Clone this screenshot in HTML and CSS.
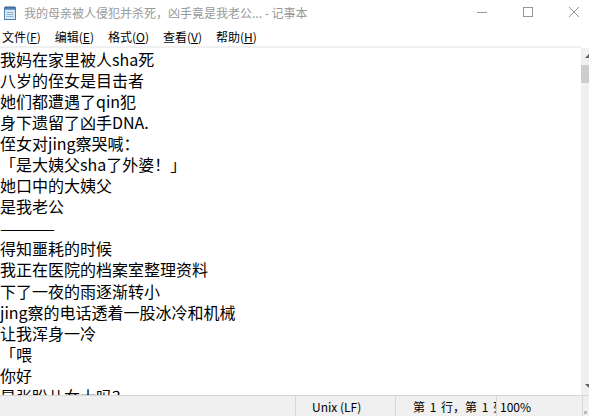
FILE: index.html
```html
<!DOCTYPE html>
<html lang="zh">
<head>
<meta charset="utf-8">
<title>记事本</title>
<link rel="stylesheet" href="styles.css">
</head>
<body>
<div class="window">
  <div class="titlebar">
    <svg class="app-icon" width="14" height="15" viewBox="0 0 14 15">
      <rect x="1.5" y="2.5" width="11" height="12" fill="#dbe9f6" stroke="#4a7fb8"/>
      <rect x="2" y="3" width="10" height="2" fill="#6f9fd3"/>
      <path d="M3 1v3M5 1v3M7 1v3M9 1v3M11 1v3" stroke="#3d5f86" stroke-width="1"/>
      <path d="M3.5 7.5h7M3.5 9.5h7M3.5 11.5h7" stroke="#8fb2d8" stroke-width="1"/>
    </svg>
    <span class="title">我的母亲被人侵犯并杀死，凶手竟是我老公... - 记事本</span>
    <div class="controls">
      <div class="ctl"><svg width="10" height="10" viewBox="0 0 10 10"><path d="M0 5.5h10" stroke="#999" stroke-width="1"/></svg></div>
      <div class="ctl"><svg width="10" height="10" viewBox="0 0 10 10"><rect x="0.5" y="0.5" width="9" height="9" fill="none" stroke="#999" stroke-width="1"/></svg></div>
      <div class="ctl"><svg width="10" height="10" viewBox="0 0 10 10"><path d="M0 0L10 10M10 0L0 10" stroke="#999" stroke-width="1"/></svg></div>
    </div>
  </div>
  <div class="menubar">
    <span class="menu">文件(<u>F</u>)</span>
    <span class="menu">编辑(<u>E</u>)</span>
    <span class="menu">格式(<u>O</u>)</span>
    <span class="menu">查看(<u>V</u>)</span>
    <span class="menu">帮助(<u>H</u>)</span>
  </div>
  <div class="divider"></div>
  <div class="main">
    <div class="editor">
      <div class="line">我妈在家里被人sha死</div>
      <div class="line">八岁的侄女是目击者</div>
      <div class="line">她们都遭遇了qin犯</div>
      <div class="line">身下遗留了凶手DNA.</div>
      <div class="line">侄女对jing察哭喊：</div>
      <div class="line">「是大姨父sha了外婆！」</div>
      <div class="line">她口中的大姨父</div>
      <div class="line">是我老公</div>
      <div class="line dash">————</div>
      <div class="line">得知噩耗的时候</div>
      <div class="line">我正在医院的档案室整理资料</div>
      <div class="line">下了一夜的雨逐渐转小</div>
      <div class="line">jing察的电话透着一股冰冷和机械</div>
      <div class="line">让我浑身一冷</div>
      <div class="line">「喂</div>
      <div class="line">你好</div>
      <div class="line">是张盼儿女士吗？</div>
    </div>
    <div class="scrollbar">
      <div class="arrow up"></div>
      <div class="thumb"></div>
      <div class="track"></div>
      <div class="arrow down"></div>
    </div>
  </div>
  <div class="statusbar">
    <div class="cell empty"></div>
    <div class="cell eol">Unix (LF)</div>
    <div class="cell pos">第 1 行，第 1 列</div>
    <div class="cell zoom">100%</div>
    <div class="grip"></div>
  </div>
</div>
</body>
</html>
```

FILE: styles.css
```css
html, body {
  margin: 0;
  padding: 0;
  background: #ffffff;
  overflow: hidden;
}
body {
  width: 589px;
  height: 416px;
  font-family: "Noto Sans CJK SC", "Noto Sans", sans-serif;
}
.window {
  width: 589px;
  height: 416px;
  display: flex;
  flex-direction: column;
  overflow: hidden;
}
.titlebar {
  height: 27px;
  flex: none;
  display: flex;
  align-items: center;
}
.app-icon {
  margin-left: 3px;
  margin-top: -3px;
  flex: none;
}
.title {
  margin-left: 7px;
  font-size: 12px;
  color: #999999;
  white-space: nowrap;
  margin-top: -2px;
}
.controls {
  margin-left: auto;
  margin-right: -8px;
  display: flex;
  flex: none;
  align-self: stretch;
}
.ctl {
  width: 46px;
  display: flex;
  align-items: center;
  justify-content: center;
  margin-top: -4px;
}
.menubar {
  height: 19px;
  flex: none;
  display: flex;
  align-items: center;
  font-size: 12px;
  color: #000;
  padding-left: 2px;
  gap: 14px;
}
.menu u {
  text-decoration: underline;
  text-underline-offset: 1px;
}
.divider {
  height: 2px;
  flex: none;
  background: #f0f0f0;
  margin-right: 8px;
}
.main {
  flex: 1;
  display: flex;
  min-height: 0;
}
.editor {
  flex: 1;
  overflow: hidden;
  font-size: 16px;
  line-height: 21.05px;
  color: #000;
  padding-top: 1px;
}
.line {
  white-space: nowrap;
  height: 21.05px;
}
.line.dash {
  letter-spacing: -2px;
  font-size: 17px;
  line-height: 21.05px;
}
.scrollbar {
  width: 8px;
  flex: none;
  background: #f0f0f0;
  display: flex;
  flex-direction: column;
}
.arrow {
  height: 17px;
  flex: none;
  position: relative;
}
.arrow.up::before {
  content: "";
  position: absolute;
  left: 4px;
  top: 6px;
  border-left: 4px solid transparent;
  border-right: 4px solid transparent;
  border-bottom: 4px solid #606060;
}
.arrow.down::before {
  content: "";
  position: absolute;
  left: 4px;
  top: 6px;
  border-left: 4px solid transparent;
  border-right: 4px solid transparent;
  border-top: 4px solid #606060;
}
.thumb {
  height: 18px;
  flex: none;
  background: #cdcdcd;
}
.track {
  flex: 1;
}
.statusbar {
  height: 20px;
  flex: none;
  background: #f0f0f0;
  border-top: 1px solid #d7d7d7;
  display: flex;
  align-items: stretch;
  font-size: 12px;
  color: #000;
}
.cell {
  display: flex;
  align-items: center;
  white-space: nowrap;
  overflow: hidden;
  border-right: 1px solid #d7d7d7;
  flex: none;
}
.cell.empty {
  width: 295px;
}
.cell.eol {
  width: 83px;
  padding-left: 16px;
}
.cell.pos {
  width: 83px;
  padding-left: 17px;
  word-spacing: 2px;
}
.cell.zoom {
  width: 82px;
  padding-left: 3px;
  border-right: 1px solid #d7d7d7;
}
.grip {
  flex: 1;
  position: relative;
}
.grip::after {
  content: "";
  position: absolute;
  right: 2px;
  bottom: 2px;
  width: 3px;
  height: 3px;
  background: #b8b8b8;
}
```
